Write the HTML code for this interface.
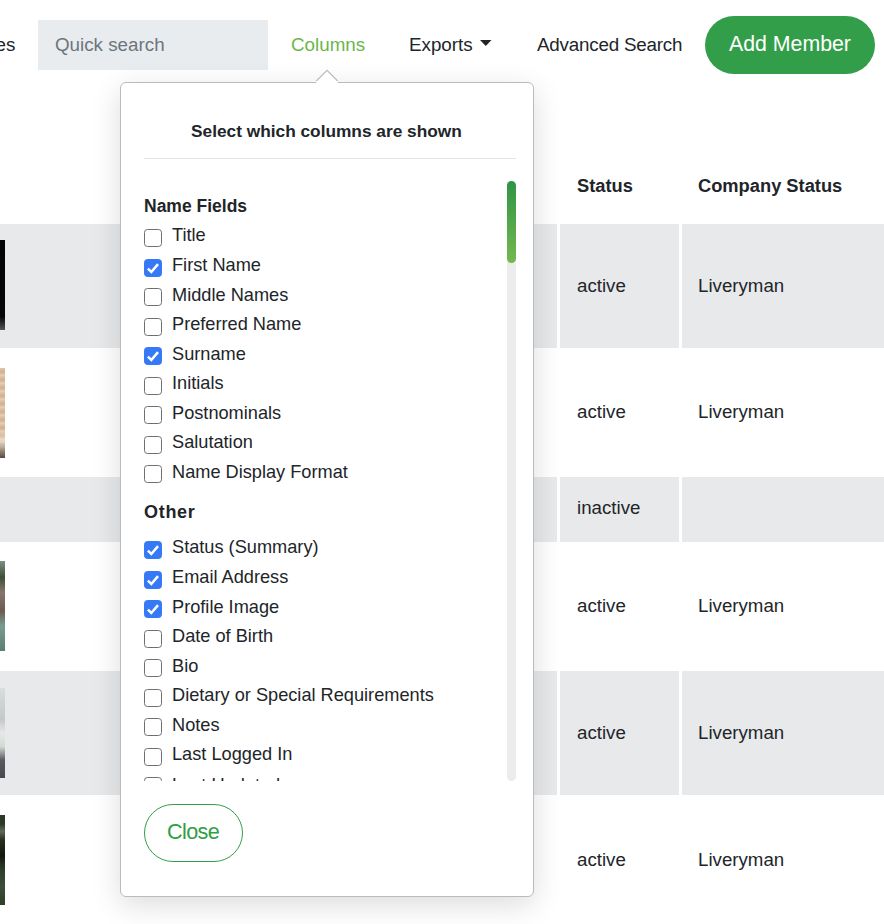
<!DOCTYPE html>
<html><head><meta charset="utf-8">
<style>
*{box-sizing:border-box;margin:0;padding:0}
html,body{width:884px;height:924px;overflow:hidden;background:#fff}
body{position:relative;font-family:"Liberation Sans",sans-serif;color:#212529}
.abs{position:absolute;white-space:nowrap}
.t{position:absolute;white-space:nowrap;line-height:1}
.nav{font-size:18.8px;color:#212529}
.search{left:38px;top:20px;width:230px;height:50px;background:#e9ecef}
.btn-add{left:705px;top:16px;width:170px;height:58px;border-radius:29px;background:#339e4a}
.row{position:absolute;left:0;width:884px;background:#e8e9eb}
.gap{position:absolute;width:3px;background:#fff}
.cell{font-size:18.7px;color:#212529}
.th{font-size:18.3px;font-weight:bold;color:#212529}
.img{position:absolute;left:0;width:5px;height:90px}
.pop{left:120px;top:82px;width:414px;height:815px;background:#fff;border:1px solid #bbbbbb;border-radius:6px;box-shadow:0 8px 30px rgba(0,0,0,.14)}
.arrow{position:absolute;left:316px;top:70px;width:22px;height:13px;overflow:hidden}
.lab{font-size:18.2px;color:#212529}
.cb{position:absolute;left:144px;width:18px;height:18px;border:1.2px solid #6f6f6f;border-radius:3.5px;background:#fff}
.cb.on{background:#3579f6;border-color:#3579f6}
.cb svg{position:absolute;left:0;top:0}
.grp{font-size:17.5px;font-weight:bold;color:#212529}
</style></head>
<body>
<!-- top nav -->
<div class="t nav" style="left:-4.5px;top:36px">es</div>
<div class="abs search"></div>
<div class="t nav" style="left:55px;top:36px;color:#6c757d">Quick search</div>
<div class="t nav" style="left:291px;top:36px;color:#6cb64a">Columns</div>
<div class="t nav" style="left:409px;top:36px">Exports</div>
<svg class="abs" style="left:480px;top:40px" width="11.5" height="6" viewBox="0 0 11.5 6"><path d="M0 0H11.5L5.75 6Z" fill="#212529"/></svg>
<div class="t nav" style="left:537px;top:36px;letter-spacing:-0.2px">Advanced Search</div>
<div class="abs btn-add"></div>
<div class="t" style="left:729px;top:34px;font-size:21.3px;color:#fff">Add Member</div>

<!-- table header -->
<div class="t th" style="left:577px;top:177px">Status</div>
<div class="t th" style="left:698px;top:177px">Company Status</div>

<!-- rows -->
<div class="row" style="top:224px;height:124px"></div>
<div class="row" style="top:477px;height:65px"></div>
<div class="row" style="top:671px;height:124px"></div>
<div class="gap" style="left:557px;top:224px;height:700px"></div>
<div class="gap" style="left:679px;top:224px;height:700px"></div>

<div class="img" style="top:240px;background:linear-gradient(#040404,#060606 85%,#3a3a3a 95%,#555 100%)"></div>
<div class="img" style="top:368px;background:repeating-linear-gradient(#e3c7aa 0,#d2ae8c 4px,#e8d2bb 8px),#d9b89a;"></div>
<div class="img" style="top:368px;height:90px;background:linear-gradient(rgba(0,0,0,0) 0%,rgba(0,0,0,0) 70%,rgba(240,230,220,.6) 82%,rgba(70,60,50,.9) 100%)"></div>
<div class="img" style="top:561px;background:linear-gradient(#7d8f85 0%,#3f4f35 18%,#85766c 35%,#6e5a50 55%,#7a9a90 72%,#5a8076 100%)"></div>
<div class="img" style="top:688px;background:linear-gradient(#d8dde0 0%,#c2c9c8 35%,#e8e8e8 50%,#d2dad2 65%,#5a5a60 80%,#48484e 100%)"></div>
<div class="img" style="top:815px;background:linear-gradient(#2b3a26 0%,#2b3a26 10%,#5d6a5a 18%,#2a2e1e 28%,#121810 45%,#2c3d2c 60%,#3d4f38 80%,#2e3e28 100%)"></div>

<div class="t cell" style="left:577px;top:277px">active</div>
<div class="t cell" style="left:698px;top:277px">Liveryman</div>
<div class="t cell" style="left:577px;top:403px">active</div>
<div class="t cell" style="left:698px;top:403px">Liveryman</div>
<div class="t cell" style="left:577px;top:499px">inactive</div>
<div class="t cell" style="left:577px;top:597px">active</div>
<div class="t cell" style="left:698px;top:597px">Liveryman</div>
<div class="t cell" style="left:577px;top:724px">active</div>
<div class="t cell" style="left:698px;top:724px">Liveryman</div>
<div class="t cell" style="left:577px;top:851px">active</div>
<div class="t cell" style="left:698px;top:851px">Liveryman</div>

<!-- popover -->
<div class="abs pop"></div>
<svg class="abs" style="left:314px;top:69px" width="26" height="16" viewBox="0 0 26 16"><path d="M2.3 12 L13 1.4 L23.7 12Z" fill="#fff"/><path d="M2.3 12 L13 1.4 L23.7 12" fill="none" stroke="#bbbbbb" stroke-width="1.2"/><rect x="2.3" y="12" width="21.4" height="3" fill="#fff"/></svg>

<div class="t" style="left:191px;top:123px;font-size:17.3px;font-weight:bold">Select which columns are shown</div>
<div class="abs" style="left:144px;top:158px;width:372px;height:1px;background:#e3e5e8"></div>

<!-- scrollbar -->
<div class="abs" style="left:507px;top:181px;width:9px;height:600px;border-radius:4.5px;background:#ececec"></div>
<div class="abs" style="left:507px;top:181px;width:9px;height:82px;border-radius:4.5px;background:linear-gradient(#2f9445,#74b84f)"></div>

<div id="list" class="abs" style="left:0;top:0;width:500px;height:781px;overflow:hidden">
<div class="t grp" style="left:144px;top:198px">Name Fields</div>
<div class="cb" style="top:229px"></div>
<div class="t lab" style="left:172px;top:226.4px">Title</div>
<div class="cb on" style="top:259px"><svg width="18" height="18" viewBox="0 0 18 18" style="left:-1.2px;top:-1.2px"><path d="M3.9 9.7 L7.3 13 L14 5.1" fill="none" stroke="#fff" stroke-width="2.5" stroke-linecap="butt" stroke-linejoin="miter"/></svg></div>
<div class="t lab" style="left:172px;top:256.0px">First Name</div>
<div class="cb" style="top:288px"></div>
<div class="t lab" style="left:172px;top:285.5px">Middle Names</div>
<div class="cb" style="top:318px"></div>
<div class="t lab" style="left:172px;top:315.0px">Preferred Name</div>
<div class="cb on" style="top:347px"><svg width="18" height="18" viewBox="0 0 18 18" style="left:-1.2px;top:-1.2px"><path d="M3.9 9.7 L7.3 13 L14 5.1" fill="none" stroke="#fff" stroke-width="2.5" stroke-linecap="butt" stroke-linejoin="miter"/></svg></div>
<div class="t lab" style="left:172px;top:344.6px">Surname</div>
<div class="cb" style="top:377px"></div>
<div class="t lab" style="left:172px;top:374.1px">Initials</div>
<div class="cb" style="top:406px"></div>
<div class="t lab" style="left:172px;top:403.7px">Postnominals</div>
<div class="cb" style="top:436px"></div>
<div class="t lab" style="left:172px;top:433.2px">Salutation</div>
<div class="cb" style="top:465px"></div>
<div class="t lab" style="left:172px;top:462.8px">Name Display Format</div>
<div class="t grp" style="left:144px;top:503.4px;font-size:18px;letter-spacing:0.7px">Other</div>
<div class="cb on" style="top:541px"><svg width="18" height="18" viewBox="0 0 18 18" style="left:-1.2px;top:-1.2px"><path d="M3.9 9.7 L7.3 13 L14 5.1" fill="none" stroke="#fff" stroke-width="2.5" stroke-linecap="butt" stroke-linejoin="miter"/></svg></div>
<div class="t lab" style="left:172px;top:538.4px">Status (Summary)</div>
<div class="cb on" style="top:571px"><svg width="18" height="18" viewBox="0 0 18 18" style="left:-1.2px;top:-1.2px"><path d="M3.9 9.7 L7.3 13 L14 5.1" fill="none" stroke="#fff" stroke-width="2.5" stroke-linecap="butt" stroke-linejoin="miter"/></svg></div>
<div class="t lab" style="left:172px;top:567.9px">Email Address</div>
<div class="cb on" style="top:600px"><svg width="18" height="18" viewBox="0 0 18 18" style="left:-1.2px;top:-1.2px"><path d="M3.9 9.7 L7.3 13 L14 5.1" fill="none" stroke="#fff" stroke-width="2.5" stroke-linecap="butt" stroke-linejoin="miter"/></svg></div>
<div class="t lab" style="left:172px;top:597.5px">Profile Image</div>
<div class="cb" style="top:630px"></div>
<div class="t lab" style="left:172px;top:627.0px">Date of Birth</div>
<div class="cb" style="top:659px"></div>
<div class="t lab" style="left:172px;top:656.6px">Bio</div>
<div class="cb" style="top:689px"></div>
<div class="t lab" style="left:172px;top:686.1px">Dietary or Special Requirements</div>
<div class="cb" style="top:718px"></div>
<div class="t lab" style="left:172px;top:715.7px">Notes</div>
<div class="cb" style="top:748px"></div>
<div class="t lab" style="left:172px;top:745.2px">Last Logged In</div>
<div class="cb" style="top:777px"></div>
<div class="t lab" style="left:172px;top:775.8px">Last Updated</div>
</div>

<div class="abs" style="left:144px;top:804px;width:99px;height:58px;border:1.3px solid #339e4a;border-radius:29px"></div>
<div class="t" style="left:167px;top:820.6px;font-size:21.6px;letter-spacing:-0.6px;color:#2f9e45">Close</div>
</body></html>
